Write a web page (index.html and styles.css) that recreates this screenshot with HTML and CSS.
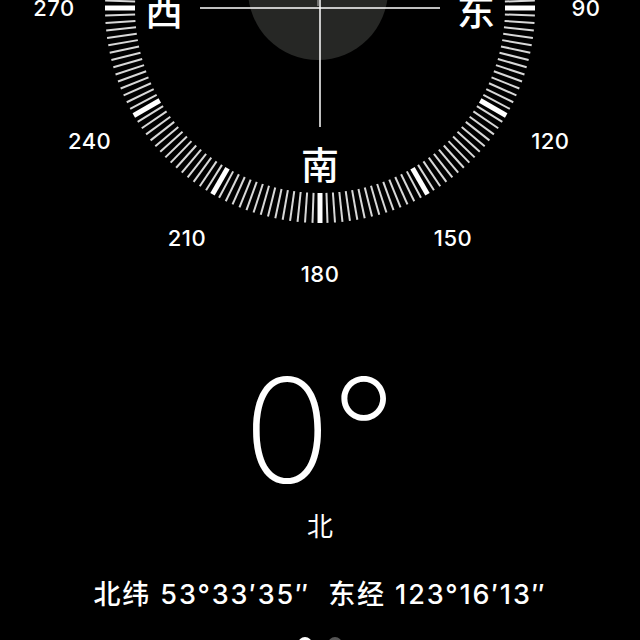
FILE: index.html
```html
<!DOCTYPE html>
<html lang="zh-CN">
<head>
  <meta charset="UTF-8">
  <title>指南针</title>
  <link rel="stylesheet" href="styles.css">
</head>
<body>
  <div class="compass">
    <svg id="dial" class="dial" width="640" height="300" viewBox="0 0 640 300">
      <circle class="bubble" cx="318" cy="-10" r="70" />
      <line class="cross thin" x1="318" y1="0" x2="318" y2="6" />
      <g id="ticks"></g>
      <line class="cross" x1="200" y1="8" x2="440" y2="8" />
      <line class="cross" x1="320" y1="0" x2="320" y2="127" />
      <g id="labels"></g>
    </svg>
  </div>

  <div class="reading">0°</div>
  <div class="direction">北</div>
  <div class="coords">北纬 53°33′35″&nbsp; 东经 123°16′13″</div>

  <div class="pager">
    <span class="dot active"></span>
    <span class="dot"></span>
  </div>

  <script>
    const ns = 'http://www.w3.org/2000/svg';
    const cx = 320, cy = 8;
    const ticks = document.getElementById('ticks');
    const labels = document.getElementById('labels');

    function point(deg, r) {
      const a = deg * Math.PI / 180;
      return [cx + r * Math.sin(a), cy - r * Math.cos(a)];
    }

    // only the lower half of the dial is on screen
    for (let d = 80; d <= 280; d += 2) {
      const [x1, y1] = point(d, 185);
      const [x2, y2] = point(d, 215);
      const line = document.createElementNS(ns, 'line');
      line.setAttribute('x1', x1);
      line.setAttribute('y1', y1);
      line.setAttribute('x2', x2);
      line.setAttribute('y2', y2);
      line.setAttribute('class', d % 30 === 0 ? 'tick major' : 'tick');
      ticks.appendChild(line);
    }

    function addText(deg, r, text, cls) {
      const [x, y] = point(deg, r);
      const t = document.createElementNS(ns, 'text');
      t.setAttribute('x', x);
      t.setAttribute('y', y);
      t.setAttribute('class', cls);
      t.textContent = text;
      labels.appendChild(t);
    }

    for (let d = 90; d <= 270; d += 30) {
      addText(d, 266, d, 'num');
    }
    addText(90, 156, '东', 'cardinal');
    addText(180, 154, '南', 'cardinal');
    addText(270, 156, '西', 'cardinal');
  </script>
</body>
</html>
```

FILE: styles.css
```css
html, body {
  margin: 0;
  background: #000;
  color: #fff;
  overflow: hidden;
}
body {
  width: 640px;
  height: 640px;
  font-family: Inter, "Noto Sans CJK SC", sans-serif;
}
.dial {
  display: block;
}
.bubble {
  fill: #262725;
}
.cross {
  stroke: #fff;
  stroke-width: 1.5;
}
.cross.thin {
  stroke: #bbb;
  stroke-width: 1;
}
.tick {
  stroke: #d8d8d8;
  stroke-width: 2;
}
.tick.major {
  stroke: #fff;
  stroke-width: 5;
}
.num {
  fill: #fff;
  font-family: Inter, sans-serif;
  font-size: 22px;
  font-weight: 500;
  letter-spacing: 0.5px;
  text-anchor: middle;
  dominant-baseline: central;
}
.cardinal {
  fill: #fff;
  font-family: "Noto Sans CJK SC", sans-serif;
  font-size: 38px;
  font-weight: 500;
  text-anchor: middle;
  dominant-baseline: central;
}
.reading {
  margin-top: 61px;
  font-family: Inter, sans-serif;
  font-weight: 200;
  font-size: 145px;
  line-height: 140px;
  text-align: center;
}
.direction {
  margin-top: 11px;
  font-family: "Noto Sans CJK SC", sans-serif;
  font-size: 26px;
  line-height: 26px;
  text-align: center;
}
.coords {
  margin-top: 43px;
  font-size: 27px;
  font-weight: 500;
  letter-spacing: 1.9px;
  line-height: 28px;
  text-align: center;
}
.pager {
  display: flex;
  justify-content: center;
  gap: 16px;
  margin-top: 28px;
}
.dot {
  width: 14px;
  height: 14px;
  border-radius: 50%;
  background: #555;
}
.dot.active {
  background: #fff;
}
```
